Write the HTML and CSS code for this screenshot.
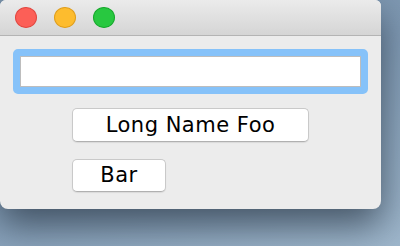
FILE: index.html
```html
<!DOCTYPE html>
<html lang="en">
<head>
    <meta charset="UTF-8">
    <meta name="viewport" content="width=device-width, initial-scale=1.0">
    <title>Window</title>
    <link rel="stylesheet" href="styles.css">
</head>
<body>

<div class="window">
    <div class="titlebar">
        <span class="light close"></span>
        <span class="light minimize"></span>
        <span class="light zoom"></span>
    </div>
    <div class="content">
        <div class="focus-ring">
            <input type="text" class="field">
        </div>
        <div class="buttons">
            <button class="btn long">Long Name Foo</button>
            <button class="btn short">Bar</button>
        </div>
    </div>
</div>

</body>
</html>
```

FILE: styles.css
```css
html, body {
    margin: 0;
    height: 100%;
}

body {
    font-family: 'DejaVu Sans', sans-serif;
    background: linear-gradient(160deg, #7a93ab 0%, #7f99b3 45%, #9fb7cc 100%);
    overflow: hidden;
}

.window {
    width: 381px;
    height: 209px;
    background-color: #ececec;
    border-radius: 6px 6px 8px 8px;
    box-shadow: 0 16px 36px rgba(35, 48, 62, 0.7);
    display: flex;
    flex-direction: column;
    overflow: hidden;
}

.titlebar {
    height: 35px;
    border-bottom: 1px solid #b4b4b4;
    background: linear-gradient(#ebebeb, #d5d5d5);
    display: flex;
    align-items: center;
    gap: 17px;
    padding-left: 15px;
}

.light {
    width: 22px;
    height: 21px;
    border-radius: 50%;
    box-sizing: border-box;
}

.close {
    background-color: #fc5f57;
    border: 1px solid #e2463f;
}

.minimize {
    background-color: #fdbc2e;
    border: 1px solid #e09e1a;
}

.zoom {
    background-color: #28c840;
    border: 1px solid #14a92a;
}

.content {
    padding: 13px 0 0 13px;
}

.focus-ring {
    width: 355px;
    height: 45px;
    box-sizing: border-box;
    border: 7px solid #86c2f9;
    border-radius: 5px;
    display: flex;
}

.field {
    flex: 1;
    margin: 0;
    border: 1px solid #bdbdbd;
    background: #fff;
    outline: none;
    padding: 0;
}

.buttons {
    display: flex;
    flex-direction: column;
    align-items: flex-start;
    gap: 17px;
    padding: 14px 0 0 59px;
}

.btn {
    font-family: 'DejaVu Sans', sans-serif;
    font-size: 21px;
    letter-spacing: 0.5px;
    color: #000;
    background: #fff;
    border: 1px solid #c9c9c9;
    border-bottom-color: #b0b0b0;
    border-radius: 5px;
    box-shadow: 0 1px 1px rgba(0, 0, 0, 0.08);
    padding: 0 0 1px;
    margin: 0;
}

.btn.long {
    width: 237px;
    height: 34px;
}

.btn.short {
    width: 94px;
    height: 33px;
}
```
